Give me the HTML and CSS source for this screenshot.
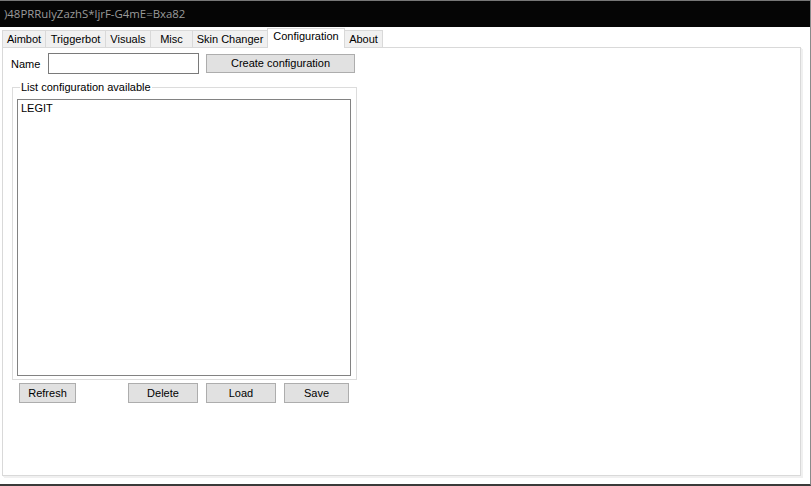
FILE: index.html
```html
<!DOCTYPE html>
<html lang="en">
<head>
  <meta charset="UTF-8">
  <title>Configuration</title>
  <link rel="stylesheet" href="styles.css">
</head>
<body>

<div class="window">
  <div class="titlebar">)48PRRulyZazhS*ljrF-G4mE=Bxa82</div>

  <div class="tabs">
    <div class="tab">Aimbot</div>
    <div class="tab">Triggerbot</div>
    <div class="tab">Visuals</div>
    <div class="tab">Misc</div>
    <div class="tab">Skin Changer</div>
    <div class="tab active">Configuration</div>
    <div class="tab">About</div>
  </div>

  <div class="page">
    <div class="name-row">
      <label for="nome">Name</label>
      <input type="text" id="nome">
      <div class="btn btn-create">Create configuration</div>
    </div>

    <fieldset class="group">
      <legend>List configuration available</legend>
      <div class="listbox">
        <div class="item">LEGIT</div>
      </div>
    </fieldset>

    <div class="actions">
      <div class="btn btn-refresh">Refresh</div>
      <div class="btn btn-delete">Delete</div>
      <div class="btn btn-load">Load</div>
      <div class="btn btn-save">Save</div>
    </div>
  </div>
</div>

</body>
</html>
```

FILE: styles.css
```css
* {
  box-sizing: border-box;
  margin: 0;
  padding: 0;
}
body {
  font-family: "Liberation Sans", Arial, sans-serif;
  font-size: 11px;
  color: #000;
  background: #fff;
  width: 811px;
  height: 486px;
  overflow: hidden;
}
.window {
  width: 811px;
  height: 486px;
  background: #fff;
  border-right: 1px solid #8a8a8a;
  border-bottom: 2px solid #3a3a3a;
}
.titlebar {
  height: 27px;
  background: #050505;
  border-top: 1px solid #777;
  color: #9a9a9a;
  font-family: "Open Sans", "Noto Sans", sans-serif;
  font-size: 11.4px;
  line-height: 26px;
  padding-left: 4px;
  white-space: nowrap;
}
.tabs {
  display: flex;
  align-items: flex-end;
  height: 20px;
  padding-left: 2px;
}
.tab {
  height: 17px;
  line-height: 17px;
  background: #f0f0f0;
  border: 1px solid #d9d9d9;
  border-bottom: none;
  margin-right: -1px;
  text-align: center;
  white-space: nowrap;
}
.tab:nth-child(1) { width: 44px; }
.tab:nth-child(2) { width: 61px; }
.tab:nth-child(3) { width: 46px; }
.tab:nth-child(4) { width: 43px; }
.tab:nth-child(5) { width: 76px; }
.tab:nth-child(6) { width: 78px; }
.tab:nth-child(7) { width: 39px; }
.tab.active {
  height: 20px;
  line-height: 15px;
  background: #fff;
  margin-bottom: -1px;
  position: relative;
  z-index: 1;
}
.page {
  margin-left: 2px;
  width: 799px;
  height: 429px;
  border: 1px solid #d9d9d9;
  box-shadow: 1px 1px 0 #f0f0f0, 2px 2px 0 #f0f0f0;
  padding-top: 5px;
}
.name-row {
  display: flex;
  align-items: flex-start;
  height: 21px;
  margin-left: 8px;
}
.name-row label {
  width: 37px;
  padding-top: 1px;
  line-height: 20px;
}
.name-row input {
  width: 151px;
  height: 21px;
  border: 1px solid #7a7a7a;
  background: #fff;
  outline: none;
}
.btn {
  height: 20px;
  line-height: 18px;
  background: #e1e1e1;
  border: 1px solid #adadad;
  text-align: center;
  cursor: pointer;
}
.btn:hover {
  background: #e5f1fb;
  border-color: #0078d7;
}
.btn-create {
  width: 149px;
  height: 19px;
  line-height: 17px;
  margin-left: 7px;
  margin-top: 1px;
}
.group {
  margin: 6px 0 0 9px;
  width: 345px;
  border: 1px solid #dcdcdc;
  padding: 0 5px 3px 4px;
}
.group legend {
  margin-left: 3px;
  padding: 0 1px;
  line-height: 14px;
}
.listbox {
  margin-top: 5px;
  height: 277px;
  border: 1px solid #828282;
  background: #fff;
}
.item {
  padding-left: 3px;
  line-height: 13px;
  margin-top: 2px;
}
.actions {
  display: flex;
  margin: 3px 0 0 16px;
}
.btn-refresh { width: 57px; }
.btn-delete { width: 70px; margin-left: 52px; }
.btn-load { width: 70px; margin-left: 8px; }
.btn-save { width: 65px; margin-left: 8px; }
```
